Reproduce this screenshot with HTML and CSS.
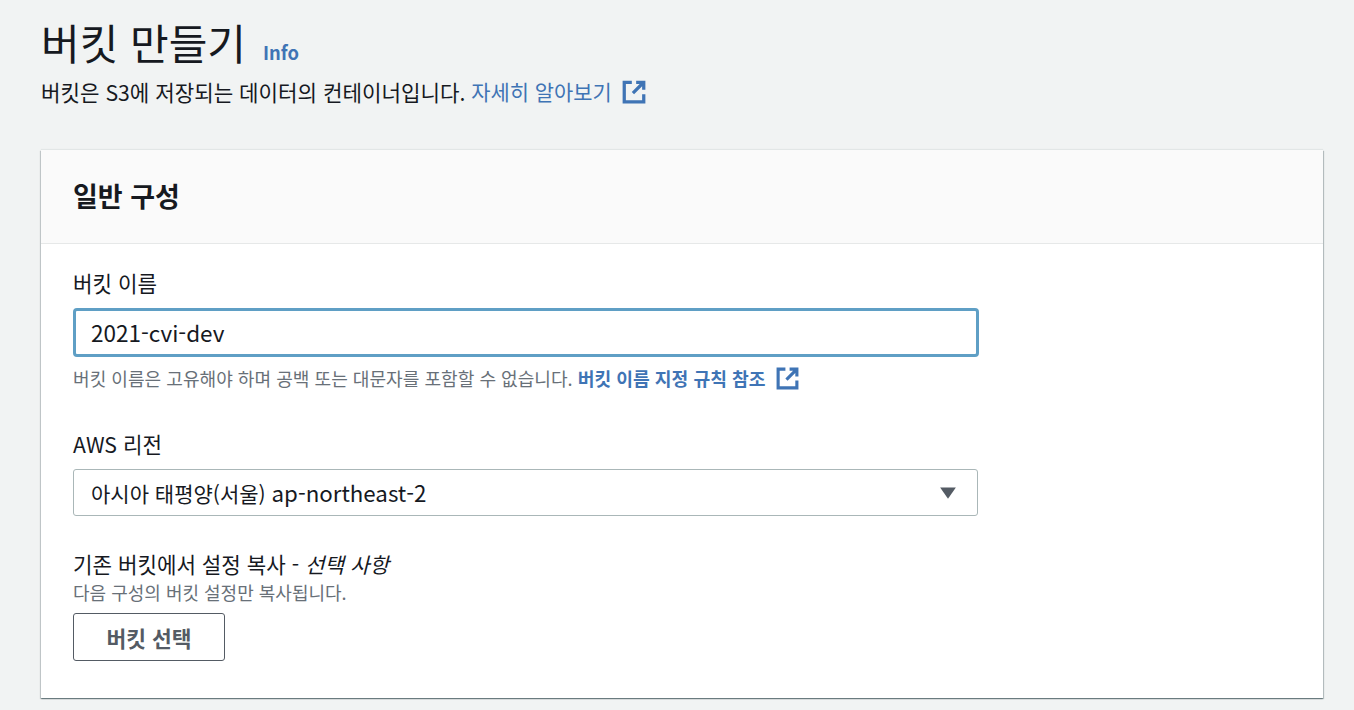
FILE: index.html
```html
<!DOCTYPE html>
<html lang="ko">
  <head>
    <meta charset="utf-8">
    <title>버킷 만들기</title>
    <link rel="stylesheet" href="styles.css">
  </head>
  <body>
    <header class="page-head">
      <div class="title-row">
        <h1>버킷 만들기</h1>
        <a class="info-link">Info</a>
      </div>
      <p class="lead">버킷은 S3에 저장되는 데이터의 컨테이너입니다. <a class="lead-link">자세히 알아보기</a>
        <svg class="ext-icon" viewBox="0 0 24 24"><path d="M10 3H3v18h18v-7M14 3h7v7M21 3L11 13" /></svg>
      </p>
    </header>

    <section class="card">
      <div class="card-head">
        <h2>일반 구성</h2>
      </div>
      <div class="card-body">
        <div class="field field-name">
          <label>버킷 이름</label>
          <div class="input input-focus">2021-cvi-dev</div>
          <p class="hint">버킷 이름은 고유해야 하며 공백 또는 대문자를 포함할 수 없습니다. <a class="hint-link">버킷 이름 지정 규칙 참조</a>
            <svg class="ext-icon" viewBox="0 0 24 24"><path d="M10 3H3v18h18v-7M14 3h7v7M21 3L11 13" /></svg>
          </p>
        </div>
        <div class="field field-region">
          <label>AWS 리전</label>
          <div class="input input-select">
            <span>아시아 태평양(서울) <span class="latin">ap-northeast-2</span></span>
            <svg class="caret" viewBox="0 0 16 12"><path d="M1 1h14L8 11z" /></svg>
          </div>
        </div>
        <div class="field field-copy">
          <label>기존 버킷에서 설정 복사 - <em>선택 사항</em></label>
          <p class="desc">다음 구성의 버킷 설정만 복사됩니다.</p>
          <button class="btn">버킷 선택</button>
        </div>
      </div>
    </section>
  </body>
</html>
```

FILE: styles.css
```css
html, body {
  height: 100%;
}
body {
  margin: 0;
  padding: 0 31px 0 41px;
  background: #f1f3f3;
  color: #16191f;
  font-family: "Noto Sans CJK KR", "Noto Sans", sans-serif;
  overflow: hidden;
}
h1, h2, p, label {
  margin: 0;
}
.page-head {
  height: 150px;
  box-sizing: border-box;
  padding-top: 12px;
}
.title-row {
  display: flex;
  align-items: baseline;
  gap: 17px;
  height: 60px;
}
h1 {
  font-size: 42px;
  font-weight: 400;
  line-height: 60px;
}
.info-link {
  font-size: 18.4px;
  font-weight: 700;
  color: #3f74b5;
}
.lead {
  font-size: 21.2px;
  line-height: 39px;
  display: flex;
  align-items: center;
  white-space: pre;
}
.lead-link {
  color: #3f74b5;
  font-size: 20.9px;
}
.ext-icon {
  width: 26px;
  height: 26px;
  margin-left: 9px;
  fill: none;
  stroke: #3f74b5;
  stroke-width: 3;
}
.card {
  height: 548px;
  box-sizing: border-box;
  background: #fff;
  box-shadow: 0 1px 1px 0 rgba(0, 28, 36, 0.35), 1px 1px 1px 0 rgba(0, 28, 36, 0.2), -1px 1px 1px 0 rgba(0, 28, 36, 0.15), 0 -1px 1px 0 rgba(0, 28, 36, 0.06);
}
.card-head {
  height: 94px;
  box-sizing: border-box;
  padding: 0 32px 2px;
  display: flex;
  align-items: center;
  background: #fafafa;
  border-bottom: 1px solid #e6e8e8;
}
h2 {
  font-size: 27px;
  font-weight: 700;
}
.card-body {
  padding: 23px 32px 0;
}
.field label {
  display: block;
  font-size: 21.2px;
  line-height: 32px;
}
.field em {
  font-style: italic;
}
.input {
  width: 905px;
  height: 48px;
  box-sizing: border-box;
  padding: 0 17px;
  display: flex;
  align-items: center;
  justify-content: space-between;
  background: #fff;
  border: 1px solid #aab7b8;
  border-radius: 3px;
  font-size: 21px;
  margin-top: 8px;
}
.input-focus {
  border: 3px solid #5f9fc5;
  border-radius: 4px;
  padding: 0 15px 2px;
  width: 906px;
  height: 49px;
  margin-top: 9px;
  font-size: 22.5px;
}
.input-select {
  height: 47px;
  margin-top: 9px;
  padding-bottom: 2px;
}
.latin {
  font-size: 22.3px;
}
.hint {
  display: flex;
  align-items: center;
  font-size: 18.08px;
  line-height: 28px;
  margin-top: 7px;
  color: #687078;
  white-space: pre;
}
.hint-link {
  color: #3f74b5;
  font-weight: 700;
  font-size: 18.2px;
}
.hint .ext-icon {
  width: 25px;
  height: 25px;
  margin-left: 10px;
}
.field-region {
  margin-top: 36px;
}
.caret {
  width: 18px;
  height: 14px;
  margin: 2px 3px 0 0;
  fill: #545b64;
}
.field-copy {
  margin-top: 32px;
}
.desc {
  font-size: 18px;
  line-height: 24px;
  color: #687078;
}
.btn {
  display: block;
  width: 152px;
  height: 48px;
  margin-top: 9px;
  padding: 0;
  background: #fff;
  border: 1px solid #545b64;
  border-radius: 3px;
  color: #545b64;
  font-family: inherit;
  font-size: 21.5px;
  font-weight: 700;
}
```
